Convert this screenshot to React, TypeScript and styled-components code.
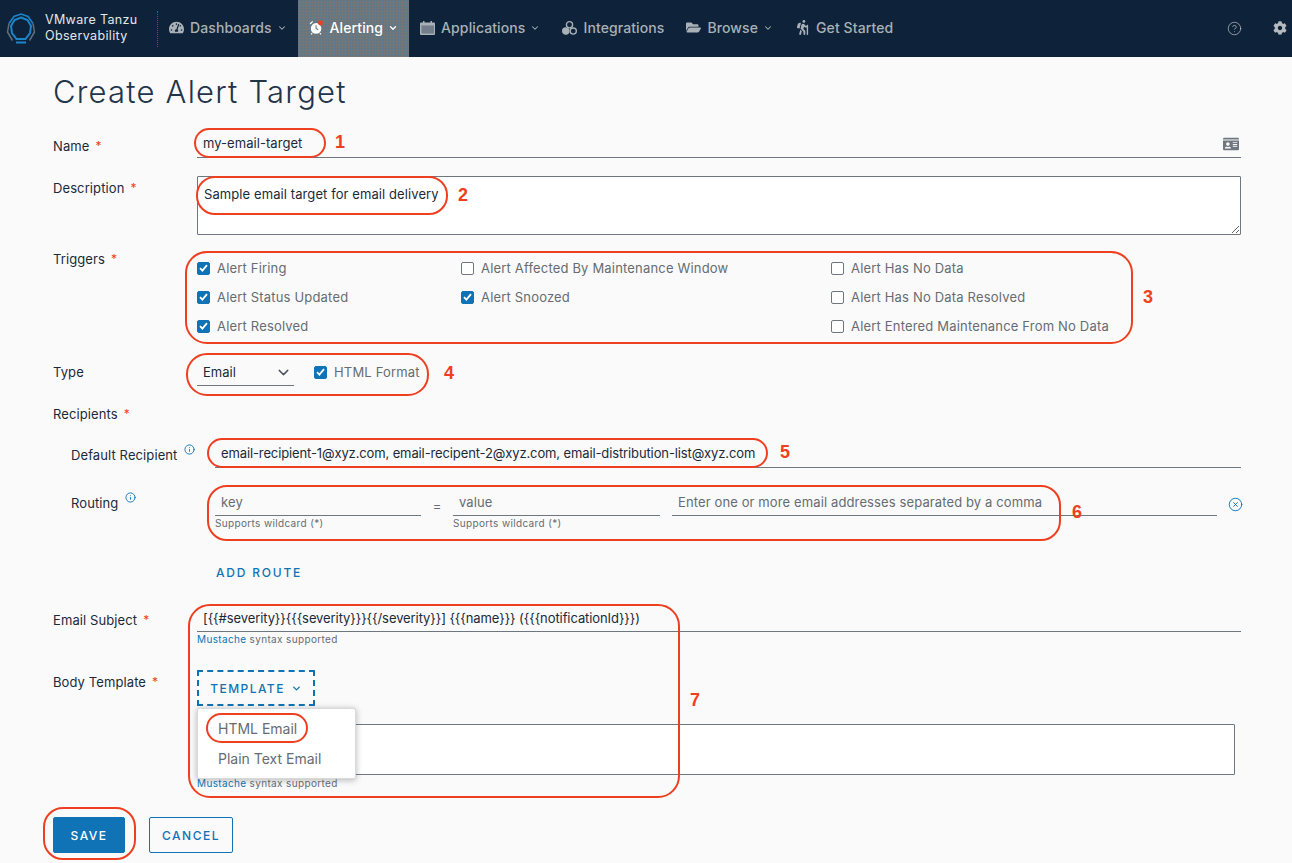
import React from "react";
import styled, { createGlobalStyle } from "styled-components";
import { FaCog, FaFolderOpen, FaHiking, FaIdCard, FaTachometerAlt } from "react-icons/fa";
import { ChevronDown, CircleHelp, CircleX, Info } from "lucide-react";

const BLUE = "#0f73b5";
const INK = "#1b2a39";
const GREY = "#666c72";
const RED = "#ee3f20";

const GlobalStyle = createGlobalStyle`
  html, body { margin: 0; padding: 0; background: #fafafa; }
  body { font-family: Inter, "Open Sans", sans-serif; color: ${INK}; }
  * { box-sizing: border-box; }
`;

const Page = styled.div`
  position: relative;
  width: 1292px;
  height: 863px;
  overflow: hidden;
`;

const Header = styled.header`
  display: flex;
  align-items: center;
  height: 57px;
  background: #0e2339;
  color: #a9b0b6;
`;

const Brand = styled.div`
  display: flex;
  align-items: center;
  gap: 9px;
  width: 158px;
  height: 36px;
  padding-left: 6px;
  border-right: 1px dotted #1d6aa5;
`;

const BrandName = styled.div`
  padding-bottom: 1px;
  font-size: 12.5px;
  line-height: 16px;
  letter-spacing: 0.35px;
  color: #e4e7ea;
`;

const Nav = styled.nav`
  display: flex;
  height: 100%;
`;

const NavItem = styled.div<{ $active?: boolean }>`
  display: flex;
  align-items: center;
  gap: 5px;
  padding: 0 11px 2px;
  font-size: 14px;
  font-weight: 500;
  letter-spacing: 0.1px;
  color: ${(p) => (p.$active ? "#fff" : "#a9b0b6")};
  background-color: ${(p) => (p.$active ? "#74777a" : "transparent")};
  background-image: ${(p) =>
    p.$active ? "radial-gradient(circle at 1px 1px, #2f78a8 0.6px, transparent 0.75px)" : "none"};
  background-size: 3px 3px;
`;

const NavIcon = styled.span`
  display: flex;
  width: 15px;
  margin-right: 1px;
  justify-content: center;
  font-size: 15px;
`;

const HeaderTools = styled.div`
  display: flex;
  align-items: center;
  gap: 31px;
  margin-left: auto;
  padding: 0 5px 1px 0;
  color: #b4bac0;
`;

const Main = styled.main`
  padding: 0 51px 0 53px;
`;

const Title = styled.h1`
  height: 71px;
  margin: 0;
  padding-top: 16px;
  font-size: 31px;
  line-height: 38px;
  font-weight: 300;
  letter-spacing: 1.2px;
  color: #22344a;
`;

const Row = styled.div<{ $top?: number; $indent?: number }>`
  display: grid;
  grid-template-columns: 144px 1fr;
  margin-top: ${(p) => p.$top ?? 0}px;
  padding-left: ${(p) => p.$indent ?? 0}px;
`;

const Label = styled.div<{ $top?: number }>`
  margin-top: ${(p) => p.$top ?? 0}px;
  font-size: 13px;
  line-height: 18px;
  letter-spacing: 0.1px;
  color: ${INK};
`;

const Required = styled.span`
  margin-left: 6px;
  font-size: 12px;
  vertical-align: 1px;
  color: ${RED};
`;

const InfoMark = styled.span`
  display: inline-block;
  margin-left: 7px;
  vertical-align: 5px;
  color: ${BLUE};
  line-height: 0;
`;

const Field = styled.div<{ $height?: number; $spacing?: number }>`
  display: flex;
  align-items: center;
  justify-content: space-between;
  height: ${(p) => p.$height ?? 30}px;
  padding: 0 0 0 6px;
  border-bottom: 1px solid #6e7680;
  font-size: 13px;
  letter-spacing: ${(p) => p.$spacing ?? 0}px;
  color: ${INK};
`;

const NudgedText = styled.span`
  margin-top: 2px;
`;

const CardIcon = styled(FaIdCard)`
  margin: 3px 2px 0 0;
  color: #6e7680;
`;

const Placeholder = styled.span`
  letter-spacing: 0.12px;
  color: ${GREY};
`;

const TextBox = styled.div<{ $height: number; $gapRight?: number; $fixed?: boolean }>`
  height: ${(p) => p.$height}px;
  margin-right: ${(p) => p.$gapRight ?? 0}px;
  padding: 8px 6px;
  background: #fff;
  border: 1px solid #6e7680;
  border-radius: 1px;
  font-size: 13px;
  line-height: 18px;
  letter-spacing: 0.09px;
  overflow: auto;
  resize: ${(p) => (p.$fixed ? "none" : "vertical")};
`;

const TriggerGrid = styled.div`
  display: grid;
  grid-template-columns: 264px 370px 1fr;
`;

const TriggerColumn = styled.div`
  display: flex;
  flex-direction: column;
`;

const CheckRow = styled.div`
  display: flex;
  align-items: center;
  gap: 7px;
  height: 29px;
  padding-bottom: 1px;
  font-size: 13px;
  letter-spacing: 0.18px;
  color: ${GREY};
`;

const Box = styled.span<{ $checked: boolean }>`
  display: flex;
  align-items: center;
  justify-content: center;
  width: 13px;
  height: 13px;
  border-radius: 2px;
  background: ${(p) => (p.$checked ? BLUE : "#fff")};
  border: 1px solid ${(p) => (p.$checked ? BLUE : "#6e7680")};
`;

const TypeRow = styled.div`
  display: flex;
  align-items: center;
  gap: 20px;
`;

const Select = styled.div`
  display: flex;
  align-items: center;
  justify-content: space-between;
  width: 97px;
  height: 27px;
  padding: 0 2px 0 6px;
  border-bottom: 1px solid #6e7680;
  font-size: 13px;
`;

const RouteRow = styled.div`
  display: grid;
  grid-template-columns: 206px 32px 207px 12px 545px 1fr;
`;

const RouteCell = styled.div`
  display: flex;
  flex-direction: column;
`;

const Equals = styled.div`
  padding-top: 10px;
  text-align: center;
  font-size: 13px;
  color: ${GREY};
`;

const Remove = styled.div`
  display: flex;
  justify-content: flex-end;
  margin-right: -2px;
  padding-top: 9px;
  color: ${BLUE};
`;

const Helper = styled.div<{ $top?: number }>`
  height: 14px;
  margin-top: ${(p) => p.$top ?? 0}px;
  font-size: 10px;
  line-height: 14px;
  letter-spacing: 0.35px;
  color: ${GREY};
`;

const HelperLink = styled.span`
  color: ${BLUE};
`;

const AddRoute = styled.div`
  margin-top: 33px;
  padding-left: 163px;
  font-size: 12px;
  line-height: 20px;
  font-weight: 500;
  letter-spacing: 1.8px;
  color: ${BLUE};
`;

const TemplateWrap = styled.div`
  position: relative;
`;

const TemplateButton = styled.div`
  display: flex;
  align-items: center;
  justify-content: center;
  gap: 6px;
  width: 118px;
  height: 36px;
  border: 2px dashed ${BLUE};
  font-size: 12px;
  font-weight: 500;
  letter-spacing: 1.45px;
  color: ${BLUE};
`;

const Menu = styled.div`
  position: absolute;
  top: 38px;
  left: 0;
  z-index: 2;
  width: 159px;
  height: 71px;
  padding-top: 5px;
  background: #fff;
  border: 1px solid #d7d9db;
  border-radius: 2px;
  box-shadow: 0 1px 6px rgba(90, 90, 90, 0.45);
`;

const MenuItem = styled.div`
  height: 30px;
  padding-left: 20px;
  font-size: 14px;
  line-height: 30px;
  color: ${GREY};
`;

const Actions = styled.div`
  display: flex;
  gap: 24px;
  margin-top: 27px;
`;

const Button = styled.div<{ $primary?: boolean }>`
  display: flex;
  align-items: center;
  justify-content: center;
  width: ${(p) => (p.$primary ? 72 : 84)}px;
  height: 36px;
  border: 1px solid ${BLUE};
  border-radius: 2px;
  font-size: 12px;
  font-weight: 500;
  letter-spacing: 1.5px;
  background: ${(p) => (p.$primary ? BLUE : "transparent")};
  color: ${(p) => (p.$primary ? "#fff" : BLUE)};
`;

const Ring = styled.div<{ $x: number; $y: number; $w: number; $h: number; $r: number }>`
  position: absolute;
  z-index: 3;
  left: ${(p) => p.$x}px;
  top: ${(p) => p.$y}px;
  width: ${(p) => p.$w}px;
  height: ${(p) => p.$h}px;
  border: 2px solid ${RED};
  border-radius: ${(p) => p.$r}px;
  pointer-events: none;
`;

const Callout = styled.div<{ $x: number; $y: number }>`
  position: absolute;
  z-index: 3;
  left: ${(p) => p.$x}px;
  top: ${(p) => p.$y}px;
  font-family: "Liberation Sans", Arial, sans-serif;
  font-size: 18px;
  line-height: 20px;
  font-weight: 700;
  color: ${RED};
`;

const rings = [
  { x: 194, y: 128, w: 132, h: 30, r: 15 },
  { x: 196, y: 176, w: 252, h: 39, r: 19 },
  { x: 185, y: 251, w: 948, h: 93, r: 22 },
  { x: 186, y: 353, w: 243, h: 43, r: 21 },
  { x: 207, y: 438, w: 561, h: 30, r: 15 },
  { x: 207, y: 485, w: 854, h: 56, r: 20 },
  { x: 188, y: 604, w: 492, h: 194, r: 22 },
  { x: 206, y: 713, w: 102, h: 30, r: 15 },
  { x: 43, y: 807, w: 93, h: 53, r: 20 },
];

const callouts = [
  { n: 1, x: 335, y: 132 },
  { n: 2, x: 458, y: 185 },
  { n: 3, x: 1143, y: 287 },
  { n: 4, x: 444, y: 363 },
  { n: 5, x: 780, y: 442 },
  { n: 6, x: 1072, y: 502 },
  { n: 7, x: 690, y: 690 },
];

const triggers = [
  [
    { label: "Alert Firing", on: true },
    { label: "Alert Status Updated", on: true },
    { label: "Alert Resolved", on: true },
  ],
  [
    { label: "Alert Affected By Maintenance Window", on: false },
    { label: "Alert Snoozed", on: true },
  ],
  [
    { label: "Alert Has No Data", on: false },
    { label: "Alert Has No Data Resolved", on: false },
    { label: "Alert Entered Maintenance From No Data", on: false },
  ],
];

const Logo = () => (
  <svg width="30" height="32" viewBox="0 0 30 32" fill="none">
    {/* outer heptagon: blue on top, grey on the lower sides */}
    <path d="M3 10.5L8 3.5 15 1 22 3.5 27 10.5" stroke="#1d84c9" strokeWidth="1.5" />
    <path d="M27 10.5L28.5 19 23.5 27.5M3 10.5L1.5 19 6.5 27.5" stroke="#5f6d7a" strokeWidth="1.5" />
    <path d="M10 29.5H20" stroke="#1d84c9" strokeWidth="2" />
    <polygon points="15,4.5 21.5,7 25,13 24,20 19.5,26 10.5,26 6,20 5,13 8.5,7" stroke="#1d84c9" strokeWidth="2" />
  </svg>
);

const AlarmIcon = () => (
  <svg width="17" height="17" viewBox="0 0 17 17">
    <circle cx="8" cy="9.5" r="6" fill="#fff" />
    <path d="M8 6v3.5l2.4 1.5" stroke="#72777b" strokeWidth="1.2" fill="none" />
    <path d="M1.2 4.5l3-3M3.5 15l-1 1.2M12.5 15l1 1.2" stroke="#fff" strokeWidth="1.4" />
    <circle cx="13" cy="3.4" r="2.8" fill={RED} />
  </svg>
);

const AppsIcon = () => (
  <svg width="15" height="14" viewBox="0 0 15 14" fill="#a9b0b6">
    <rect x="0" y="1.5" width="15" height="12.5" rx="1" />
    <path d="M3 0h1.5v3H3zM10.5 0H12v3h-1.5z" />
    <path d="M1 5h13M1 7h13M1 9h13M1 11h13M3 5v8M5 5v8M7 5v8M9 5v8M11 5v8M13 5v8" stroke="#0e2339" strokeWidth="0.4" />
  </svg>
);

const IntegrationsIcon = () => (
  <svg width="16" height="16" viewBox="0 0 16 16" fill="none" stroke="#a9b0b6" strokeWidth="1.4">
    <circle cx="8" cy="4.5" r="3.3" />
    <circle cx="4" cy="11.3" r="3.3" fill="#a9b0b6" />
    <circle cx="12" cy="11.3" r="3.3" />
  </svg>
);

const Check = () => (
  <svg width="9" height="8" viewBox="0 0 9 8" fill="none">
    <path d="M1 4.2L3.4 6.6 8 1.2" stroke="#fff" strokeWidth="1.8" />
  </svg>
);

const CheckItem = ({ label, on }: { label: string; on: boolean }) => (
  <CheckRow>
    <Box $checked={on}>{on && <Check />}</Box>
    {label}
  </CheckRow>
);

const Mustache = ({ top }: { top?: number }) => (
  <Helper $top={top}>
    <HelperLink>Mustache</HelperLink> syntax supported
  </Helper>
);

export default function App() {
  return (
    <Page>
      <GlobalStyle />
      <Header>
        <Brand>
          <Logo />
          <BrandName>
            VMware Tanzu
            <br />
            Observability
          </BrandName>
        </Brand>
        <Nav>
          <NavItem>
            <NavIcon>
              <FaTachometerAlt />
            </NavIcon>
            Dashboards <ChevronDown size={10} strokeWidth={2.5} />
          </NavItem>
          <NavItem $active>
            <NavIcon>
              <AlarmIcon />
            </NavIcon>
            Alerting <ChevronDown size={10} strokeWidth={3} />
          </NavItem>
          <NavItem>
            <NavIcon>
              <AppsIcon />
            </NavIcon>
            Applications <ChevronDown size={10} strokeWidth={2.5} />
          </NavItem>
          <NavItem>
            <NavIcon>
              <IntegrationsIcon />
            </NavIcon>
            Integrations
          </NavItem>
          <NavItem>
            <NavIcon>
              <FaFolderOpen />
            </NavIcon>
            Browse <ChevronDown size={10} strokeWidth={2.5} />
          </NavItem>
          <NavItem>
            <NavIcon>
              <FaHiking />
            </NavIcon>
            Get Started
          </NavItem>
        </Nav>
        <HeaderTools>
          <CircleHelp size={15} strokeWidth={1.2} />
          <FaCog size={14} />
        </HeaderTools>
      </Header>

      <Main>
        <Title>Create Alert Target</Title>

        <Row>
          <Label $top={9}>
            Name<Required>*</Required>
          </Label>
          <Field $spacing={0.05}>
            <span>my-email-target</span>
            <CardIcon size={16} />
          </Field>
        </Row>

        <Row $top={18}>
          <Label $top={3}>
            Description<Required>*</Required>
          </Label>
          <TextBox $height={59}>Sample email target for email delivery</TextBox>
        </Row>

        <Row $top={19}>
          <Label $top={-4}>
            Triggers<Required>*</Required>
          </Label>
          <TriggerGrid>
            {triggers.map((column, i) => (
              <TriggerColumn key={i}>
                {column.map((t) => (
                  <CheckItem key={t.label} label={t.label} on={t.on} />
                ))}
              </TriggerColumn>
            ))}
          </TriggerGrid>
        </Row>

        <Row $top={17}>
          <Label $top={5}>Type</Label>
          <TypeRow>
            <Select>
              Email <ChevronDown size={17} color="#4d5660" />
            </Select>
            <CheckItem label="HTML Format" on />
          </TypeRow>
        </Row>

        <Row $top={18}>
          <Label>
            Recipients<Required>*</Required>
          </Label>
        </Row>

        <Row $top={15} $indent={18}>
          <Label $top={6}>
            Default Recipient
            <InfoMark>
              <Info size={11} />
            </InfoMark>
          </Label>
          <Field $spacing={-0.12}>email-recipient-1@xyz.com, email-recipent-2@xyz.com, email-distribution-list@xyz.com</Field>
        </Row>

        <Row $top={20} $indent={18}>
          <Label $top={4}>
            Routing
            <InfoMark>
              <Info size={11} />
            </InfoMark>
          </Label>
          <RouteRow>
            <RouteCell>
              <Field $height={28}>
                <Placeholder>key</Placeholder>
              </Field>
              <Helper>Supports wildcard (*)</Helper>
            </RouteCell>
            <Equals>=</Equals>
            <RouteCell>
              <Field $height={28}>
                <Placeholder>value</Placeholder>
              </Field>
              <Helper>Supports wildcard (*)</Helper>
            </RouteCell>
            <span />
            <RouteCell>
              <Field $height={28}>
                <Placeholder>Enter one or more email addresses separated by a comma</Placeholder>
              </Field>
            </RouteCell>
            <Remove>
              <CircleX size={15} strokeWidth={1.5} />
            </Remove>
          </RouteRow>
        </Row>

        <AddRoute>ADD ROUTE</AddRoute>

        <Row $top={21}>
          <Label $top={7}>
            Email Subject<Required>*</Required>
          </Label>
          <div>
            <Field $height={28} $spacing={-0.09}>
              {"[{{#severity}}{{{severity}}}{{/severity}}] {{{name}}} ({{{notificationId}}})"}
            </Field>
            <Mustache />
          </div>
        </Row>

        <Row $top={24}>
          <Label $top={3}>
            Body Template<Required>*</Required>
          </Label>
          <TemplateWrap>
            <TemplateButton>
              TEMPLATE <ChevronDown size={11} strokeWidth={3} />
            </TemplateButton>
            <Menu>
              <MenuItem>HTML Email</MenuItem>
              <MenuItem>Plain Text Email</MenuItem>
            </Menu>
          </TemplateWrap>
        </Row>

        <Row $top={18}>
          <span />
          <div>
            <TextBox $height={51} $gapRight={6} $fixed />
            <Mustache top={1} />
          </div>
        </Row>

        <Actions>
          <Button $primary>SAVE</Button>
          <Button>CANCEL</Button>
        </Actions>
      </Main>

      {rings.map((r) => (
        <Ring key={`${r.x}-${r.y}`} $x={r.x} $y={r.y} $w={r.w} $h={r.h} $r={r.r} />
      ))}
      {callouts.map((c) => (
        <Callout key={c.n} $x={c.x} $y={c.y}>
          {c.n}
        </Callout>
      ))}
    </Page>
  );
}
